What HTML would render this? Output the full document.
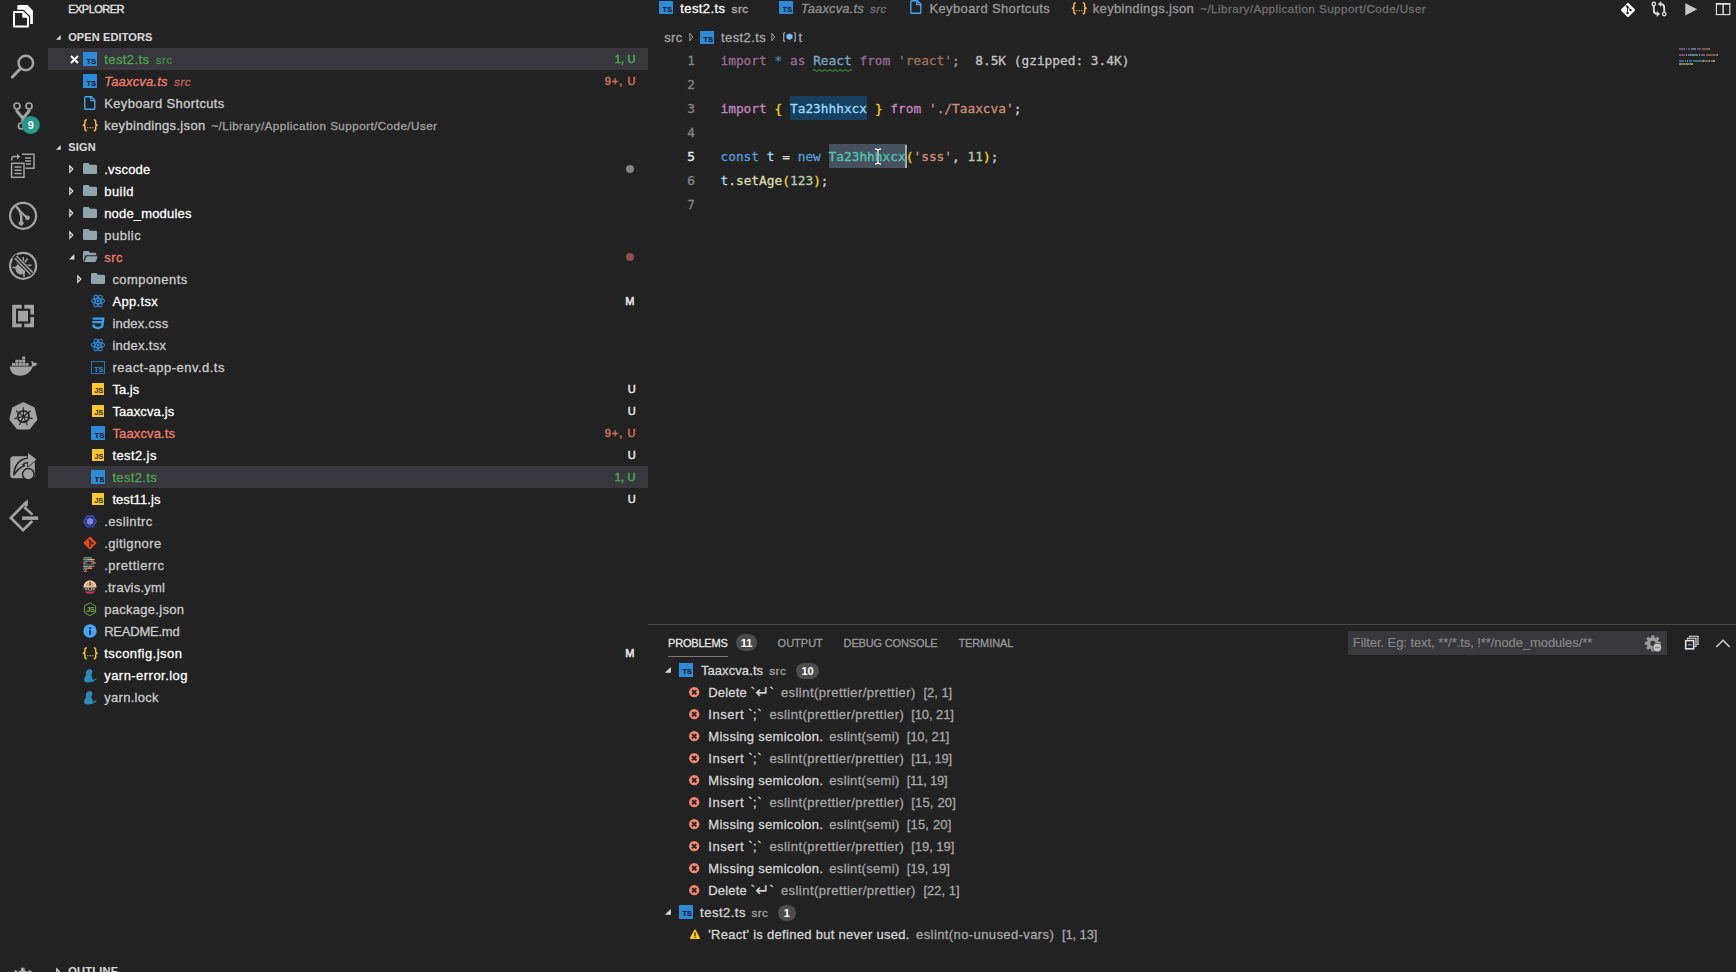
<!DOCTYPE html>
<html lang="en"><head><meta charset="utf-8"><title>test2.ts - sign</title>
<style>
html,body{margin:0;padding:0}
body{width:1736px;height:972px;background:#222222;overflow:hidden;position:relative;font-family:"Liberation Sans",sans-serif;font-size:13px;color:#cccccc}
#root{position:absolute;left:0;top:0;width:1736px;height:972px;opacity:.999}
.a{position:absolute}
svg{display:block;overflow:visible}
.row{position:absolute}
.sel{background:#37373d}
.t{position:absolute;top:.6px;white-space:pre;letter-spacing:.25px;-webkit-text-stroke:.28px currentColor}
.h{font-size:11px;font-weight:bold;color:#d8d8d8;letter-spacing:.1px;top:-.3px;-webkit-text-stroke:.1px currentColor}
.w{color:#ffffff}
.g{color:#4ca64e}
.r{color:#f0806c}
.d{font-size:11.700px;opacity:.75}
.i{font-style:italic}
.bd{font-size:11px;letter-spacing:.2px;-webkit-text-stroke:.5px currentColor;top:.3px}
.ic{overflow:hidden}
.icl{position:absolute;right:.8px;bottom:.2px;font-size:7.2px;line-height:8px;font-weight:bold;letter-spacing:.2px;-webkit-text-stroke:.12px currentColor}
.code{font-family:"DejaVu Sans Mono","Liberation Mono",monospace;font-size:12.800px;letter-spacing:0}
.code .t{letter-spacing:0;top:.7px;-webkit-text-stroke:.3px currentColor}
.ln{color:#858585;text-align:right;width:40px}
.an{color:#c4c4c4}.pk{color:#c586c0}.bl{color:#569cd6}.lb{color:#9cdcfe}.st{color:#ce9178}.pl{color:#d4d4d4}.gd{color:#ffd700}.tl{color:#4ec9b0}.nm{color:#b5cea8}.fn{color:#dcdcaa}
.fd{opacity:.72}
.pt{font-size:11px;color:#9a9a9a;letter-spacing:-.1px;top:-.4px}
.pr .t{top:-.4px}
.big{font-family:'DejaVu Sans',sans-serif;font-size:17px;line-height:10px;position:relative;top:1.200px;letter-spacing:0;-webkit-text-stroke:.1px currentColor}
.badge{position:absolute;background:#4d4d4d;border-radius:9px;color:#fff;font-size:11px;font-weight:bold;text-align:center}
.m{color:#d6d6d6}
.s{color:#a8a8a8}
</style></head>
<body>
<div id="root">
<svg class="a" style="left:8px;top:0px" width="32" height="32" viewBox="8 0 32 32" ><path d="M17.400 5.100H27.600L32.900 10.400V23.900H17.400z" fill="#fff"/><path d="M14 12H22.800L28 17.200V26.600H14z" fill="#222222" stroke="#222222" stroke-width="4.400"/><path d="M14 12H22.800L28 17.200V26.600H14z" fill="#222222" stroke="#fff" stroke-width="2" stroke-linejoin="round"/><path d="M22.300 12V17.700H28z" fill="#fff"/></svg><svg class="a" style="left:8px;top:50px" width="32" height="32" viewBox="8 50 32 32" ><circle cx="25.800" cy="63" r="7.300" fill="none" stroke="#a3a3a3" stroke-width="2.400"/><path d="M20.300 68.700L12.300 77" stroke="#a3a3a3" stroke-width="3" stroke-linecap="round"/></svg><svg class="a" style="left:8px;top:98px" width="36" height="40" viewBox="8 98 36 40" ><g fill="none" stroke="#a3a3a3"><circle cx="17" cy="106" r="3" stroke-width="1.700"/><circle cx="29" cy="106" r="3" stroke-width="1.700"/><circle cx="21.400" cy="126" r="3" stroke-width="1.700"/><path d="M17 109.400V111.300L22.900 118.300V122.600M29 109.400V111.300L23 118.300" stroke-width="3.100" stroke-linejoin="round"/></g><circle cx="30.800" cy="125" r="9" fill="#27998c"/></svg><span class="a" style="left:21.800px;top:116px;width:18px;height:18px;line-height:18px;text-align:center;color:#fff;font-size:11px;font-weight:bold">9</span><svg class="a" style="left:8px;top:148px" width="32" height="34" viewBox="8 148 32 34" ><g fill="none" stroke="#a3a3a3" stroke-width="1.500"><path d="M22 154.300H34V168.300H25.500"/><path d="M25 158h6M25 161h6M26 164h5" /><rect x="11.600" y="163.300" width="12.400" height="14" fill="#222222"/><path d="M14.500 167h7M14.500 170.200h7M14.500 173.400h7"/><path d="M11.800 160.500V158.500C11.800 157 12.500 156.500 14 156.500H18"/></g><path d="M17 153.500L20.300 156.500L17 159.500z" fill="#a3a3a3"/></svg><svg class="a" style="left:8px;top:200px" width="32" height="32" viewBox="8 200 32 32" ><circle cx="23.100" cy="215.800" r="13" fill="none" stroke="#a3a3a3" stroke-width="2.200"/><path d="M16.800 207.300C20.300 209.300 21.700 213 21.300 222" fill="none" stroke="#a3a3a3" stroke-width="2.600" stroke-linecap="round"/><path d="M20.800 211.500C22.500 214 25 216 27.300 217.500" fill="none" stroke="#a3a3a3" stroke-width="2.200"/><circle cx="21.200" cy="223.300" r="2.400" fill="#a3a3a3"/><circle cx="27.500" cy="217.800" r="2.400" fill="#a3a3a3"/></svg><svg class="a" style="left:8px;top:250px" width="32" height="32" viewBox="8 250 32 32" ><circle cx="23.100" cy="265.800" r="13" fill="none" stroke="#a3a3a3" stroke-width="2.200"/><ellipse cx="20.500" cy="269.300" rx="4.800" ry="5.600" fill="#a3a3a3" transform="rotate(-40 20.500 269.300)"/><g stroke="#a3a3a3" stroke-width="1.600" fill="none"><path d="M12.500 267.500h5M23.300 257v6M27.500 258.500l-3 4.500M26 265.300h5.500M27 268.500l4 1.800M24 272.500v4.500M17 262.500l2 2"/></g><path d="M14.200 256.200L32.300 274" stroke="#222222" stroke-width="6"/><path d="M14.800 258.200L30.500 274.600M16.400 256L32.800 272.600" stroke="#a3a3a3" stroke-width="1.500"/></svg><svg class="a" style="left:8px;top:300px" width="32" height="32" viewBox="8 300 32 32" ><rect x="12.200" y="304.800" width="21.800" height="22.500" fill="#a3a3a3"/><rect x="16" y="308.600" width="14.400" height="15" fill="#222222"/><rect x="21.700" y="304" width="2.600" height="25" fill="#222222"/><rect x="28" y="314.500" width="7" height="2.600" fill="#222222"/><rect x="18" y="310.800" width="10" height="10.600" fill="#a3a3a3"/></svg><svg class="a" style="left:6px;top:350px" width="36" height="32" viewBox="6 350 36 32" ><path d="M9.800 366.500H31.500C32 364.500 32 363 31 361.300 32.500 360.300 33.300 361.500 33.800 363 35 362.600 36.500 362.800 37.300 363.500 36.500 365.500 34.500 366.300 32.800 366.300 31 371.500 27 375.800 20 375.800 13.500 375.800 10 372 9.800 366.500z" fill="#a3a3a3"/><g fill="#a3a3a3"><rect x="12" y="363" width="3" height="2.800"/><rect x="15.400" y="363" width="3" height="2.800"/><rect x="18.800" y="363" width="3" height="2.800"/><rect x="22.200" y="363" width="3" height="2.800"/><rect x="25.600" y="363" width="3" height="2.800"/><rect x="15.400" y="359.800" width="3" height="2.800"/><rect x="18.800" y="359.800" width="3" height="2.800"/><rect x="22.200" y="359.800" width="3" height="2.800"/><rect x="22.200" y="356.600" width="3" height="2.800"/></g></svg><svg class="a" style="left:6px;top:400px" width="36" height="34" viewBox="6 400 36 34" ><polygon points="23.4,403.2 33.8,408.2 36.4,419.5 29.2,428.5 17.6,428.5 10.4,419.5 13.0,408.2" fill="#a3a3a3" stroke="#a3a3a3" stroke-width="2" stroke-linejoin="round"/><circle cx="23.400" cy="416.500" r="5.700" fill="none" stroke="#222222" stroke-width="1.700"/><path d="M23.400 416.500L23.4 407.2M23.400 416.500L30.7 410.7M23.400 416.500L32.5 418.6M23.400 416.500L27.4 424.9M23.400 416.500L19.4 424.9M23.400 416.500L14.3 418.6M23.400 416.500L16.1 410.7" stroke="#222222" stroke-width="1.100" fill="none"/><circle cx="23.400" cy="416.500" r="1.600" fill="#222222"/></svg><svg class="a" style="left:8px;top:450px" width="32" height="32" viewBox="8 450 32 32" ><rect x="10.300" y="456.300" width="24.500" height="22" rx="3" fill="#a3a3a3"/><path d="M14 475C14 466 19 459 28 458V453L36.500 459.500 28 466.500V462.500C26 462.700 24 463.500 23 464.500L24.500 465.500C19.500 467.500 16.500 470.500 14 475z" fill="#a3a3a3" stroke="#222222" stroke-width="1.500" stroke-linejoin="round"/><path d="M28 453L36.500 459.500 28 466.500z" fill="#a3a3a3"/><circle cx="28.300" cy="474.300" r="6.500" fill="#222222"/><circle cx="28.300" cy="474.300" r="5" fill="#a3a3a3"/></svg><svg class="a" style="left:6px;top:496px" width="36" height="40" viewBox="6 496 36 40" ><path d="M27 501.500L10.900 517.900 23.100 530.200 32.300 521" fill="none" stroke="#a3a3a3" stroke-width="2.700" stroke-linejoin="miter"/><path d="M27.900 499.200V505.500L25.500 507.500 24.600 503z" fill="#a3a3a3"/><path d="M24.300 507.300L32.600 514.600" stroke="#a3a3a3" stroke-width="2.500" fill="none"/><rect x="22.100" y="516.400" width="16.100" height="3.500" fill="#a3a3a3"/></svg><svg class="a" style="left:13px;top:964px" width="20" height="8" viewBox="13 964 20 8" ><circle cx="22.800" cy="979.500" r="7.500" fill="none" stroke="#a3a3a3" stroke-width="3.600"/><rect x="20.900" y="967.700" width="3.800" height="4" fill="#a3a3a3"/><rect x="20.900" y="967.700" width="3.800" height="4" fill="#a3a3a3" transform="rotate(-45 22.800 979.500)"/><rect x="20.900" y="967.700" width="3.800" height="4" fill="#a3a3a3" transform="rotate(45 22.800 979.500)"/></svg>
<div class="row " style="left:48px;top:-2px;width:600px;height:22px;line-height:22px"><span class="t " style="left:20.2px;letter-spacing:-0.517px;font-size:11px;color:#e0e0e0;top:.2px;-webkit-text-stroke:.4px currentColor">EXPLORER</span></div>
<div class="row " style="left:48px;top:26px;width:600px;height:22px;line-height:22px"><svg class="a" style="left:8.4px;top:9px" width="4.7" height="4.7" viewBox="0 0 6 6" ><path d="M6 0V6H0z" fill="#dcdcdc"/></svg><span class="t h" style="left:20.2px;letter-spacing:0.116px;">OPEN EDITORS</span></div>
<div class="row sel" style="left:48px;top:48px;width:600px;height:22px;line-height:22px"><svg class="a" style="left:21.5px;top:6.6px" width="9" height="9" viewBox="0 0 9 9" ><path d="M1 1L8 8M8 1L1 8" stroke="#fff" stroke-width="2.100" fill="none"/></svg><div class="a ic" style="left:35.2px;top:4.2px;width:13.8px;height:13.5px;background:#2d8ad6"><span class="icl" style="color:#06182b">TS</span></div><span class="t g" style="left:56.2px;letter-spacing:0.425px;">test2.ts</span><span class="t g d" style="left:107.7px;letter-spacing:0.403px;">src</span><span class="t g bd" style="left:566.8px;letter-spacing:0.139px;">1, U</span></div>
<div class="row " style="left:48px;top:70px;width:600px;height:22px;line-height:22px"><div class="a ic" style="left:35.2px;top:4.2px;width:13.8px;height:13.5px;background:#2d8ad6"><span class="icl" style="color:#06182b">TS</span></div><span class="t r i" style="left:56.2px;letter-spacing:0.192px;">Taaxcva.ts</span><span class="t r d i" style="left:126.1px;letter-spacing:0.453px;">src</span><span class="t bd" style="left:556.7px;letter-spacing:1.023px;color:#cc705c">9+, U</span></div>
<div class="row " style="left:48px;top:92px;width:600px;height:22px;line-height:22px"><svg class="a" style="left:36.3px;top:4px" width="11.6" height="14" viewBox="0 0 11.6 14" ><path d="M1.700 0.700H7.400L10.800 4.100V12.400C10.800 12.900 10.400 13.300 9.900 13.300H1.700C1.200 13.300 0.800 12.900 0.800 12.400V1.600C0.800 1.100 1.200 0.700 1.700 0.700z" fill="none" stroke="#42a5f5" stroke-width="1.400"/><path d="M6.900 0.700V4.600H10.800" fill="none" stroke="#42a5f5" stroke-width="1.400"/></svg><span class="t " style="left:56.2px;letter-spacing:0.348px;">Keyboard Shortcuts</span></div>
<div class="row " style="left:48px;top:114px;width:600px;height:22px;line-height:22px"><svg class="a" style="left:33.7px;top:4.8px" width="16.6" height="12.6" viewBox="0 0 16 12" ><g fill="none" stroke="#fbc02d" stroke-width="1.4" stroke-linecap="butt"><path d="M4.6 0.7C2.9 0.7 2.8 1.5 2.8 2.7V4.3C2.8 5.4 2.2 6 0.8 6 2.2 6 2.8 6.600 2.800 7.700V9.300C2.800 10.500 2.900 11.300 4.600 11.300"/><path d="M11.400 0.700C13.100 0.700 13.200 1.500 13.200 2.700V4.300C13.200 5.400 13.800 6 15.200 6 13.800 6 13.200 6.600 13.200 7.700V9.300C13.200 10.500 13.100 11.300 11.400 11.300"/></g><g fill="#fbc02d"><rect x="5.100" y="7.700" width="1" height="1.200"/><rect x="7.500" y="7.700" width="1" height="1.200"/><rect x="9.900" y="7.700" width="1" height="1.200"/></g></svg><span class="t " style="left:56.2px;letter-spacing:0.325px;">keybindings.json</span><span class="t d" style="left:163.3px;letter-spacing:0.426px;">~/Library/Application Support/Code/User</span></div>
<div class="row " style="left:48px;top:136px;width:600px;height:22px;line-height:22px"><svg class="a" style="left:8.4px;top:9px" width="4.7" height="4.7" viewBox="0 0 6 6" ><path d="M6 0V6H0z" fill="#dcdcdc"/></svg><span class="t h" style="left:20.2px;letter-spacing:0.201px;">SIGN</span></div>
<div class="row " style="left:48px;top:158px;width:600px;height:22px;line-height:22px"><svg class="a" style="left:20.6px;top:6.2px" width="5" height="10" viewBox="0 0 5 10" ><path d="M0.800 2L3.800 5.100L0.800 8.200z" fill="none" stroke="#e0e0e0" stroke-width="1.200" stroke-linejoin="miter"/></svg><svg class="a" style="left:35.0px;top:5.3px" width="14" height="11.1" viewBox="0 0 14 11.1" ><path d="M1.300 0h4.200l1.500 1.700h5.700c.700 0 1.300.600 1.300 1.300v6.800c0 .700-.600 1.300-1.300 1.300H1.300C.600 11.100 0 10.500 0 9.800V1.300C0 .600.600 0 1.300 0z" fill="#90a4ae"/></svg><span class="t w" style="left:56.2px;letter-spacing:0.215px;">.vscode</span><div class="a" style="left:578.400px;top:6.700px;width:8px;height:8px;border-radius:50%;background:#868686"></div></div>
<div class="row " style="left:48px;top:180px;width:600px;height:22px;line-height:22px"><svg class="a" style="left:20.6px;top:6.2px" width="5" height="10" viewBox="0 0 5 10" ><path d="M0.800 2L3.800 5.100L0.800 8.200z" fill="none" stroke="#e0e0e0" stroke-width="1.200" stroke-linejoin="miter"/></svg><svg class="a" style="left:35.0px;top:5.3px" width="14" height="11.1" viewBox="0 0 14 11.1" ><path d="M1.300 0h4.200l1.500 1.700h5.700c.700 0 1.300.600 1.300 1.300v6.800c0 .700-.600 1.300-1.300 1.300H1.300C.600 11.100 0 10.500 0 9.800V1.300C0 .600.600 0 1.300 0z" fill="#90a4ae"/></svg><span class="t w" style="left:56.2px;letter-spacing:0.458px;">build</span></div>
<div class="row " style="left:48px;top:202px;width:600px;height:22px;line-height:22px"><svg class="a" style="left:20.6px;top:6.2px" width="5" height="10" viewBox="0 0 5 10" ><path d="M0.800 2L3.800 5.100L0.800 8.200z" fill="none" stroke="#e0e0e0" stroke-width="1.200" stroke-linejoin="miter"/></svg><svg class="a" style="left:35.0px;top:5.3px" width="14" height="11.1" viewBox="0 0 14 11.1" ><path d="M1.300 0h4.200l1.500 1.700h5.700c.700 0 1.300.600 1.300 1.300v6.800c0 .700-.600 1.300-1.300 1.300H1.300C.600 11.100 0 10.500 0 9.800V1.300C0 .600.600 0 1.300 0z" fill="#90a4ae"/></svg><span class="t w" style="left:56.2px;letter-spacing:0.173px;">node_modules</span></div>
<div class="row " style="left:48px;top:224px;width:600px;height:22px;line-height:22px"><svg class="a" style="left:20.6px;top:6.2px" width="5" height="10" viewBox="0 0 5 10" ><path d="M0.800 2L3.800 5.100L0.800 8.200z" fill="none" stroke="#e0e0e0" stroke-width="1.200" stroke-linejoin="miter"/></svg><svg class="a" style="left:35.0px;top:5.3px" width="14" height="11.1" viewBox="0 0 14 11.1" ><path d="M1.300 0h4.200l1.500 1.700h5.700c.700 0 1.300.600 1.300 1.300v6.800c0 .700-.600 1.300-1.300 1.300H1.300C.600 11.100 0 10.500 0 9.800V1.300C0 .600.600 0 1.300 0z" fill="#90a4ae"/></svg><span class="t " style="left:56.2px;letter-spacing:0.526px;">public</span></div>
<div class="row " style="left:48px;top:246px;width:600px;height:22px;line-height:22px"><svg class="a" style="left:20.7px;top:7.9px" width="5.4" height="5.4" viewBox="0 0 6 6" ><path d="M6 0V6H0z" fill="#dcdcdc"/></svg><svg class="a" style="left:35.0px;top:5.4px" width="14.6" height="11.1" viewBox="0 0 14.6 11.1" ><path d="M1.300 0h4.200l1.500 1.700h4.900c.700 0 1.300.600 1.300 1.300v1.200H3.400c-.600 0-1.100.400-1.300 1L.300 10.600C.100 10.400 0 10.100 0 9.800V1.300C0 .600.600 0 1.300 0z" fill="#90a4ae"/><path d="M3.600 5.300H13.900c.400 0 .700.400.600.800l-1.400 4.200c-.200.500-.600.800-1.100.800H1.200z" fill="#90a4ae"/></svg><span class="t r" style="left:56.2px;letter-spacing:0.528px;">src</span><div class="a" style="left:578.400px;top:6.700px;width:8px;height:8px;border-radius:50%;background:#8c5046"></div></div>
<div class="row " style="left:48px;top:268px;width:600px;height:22px;line-height:22px"><svg class="a" style="left:28.8px;top:6.2px" width="5" height="10" viewBox="0 0 5 10" ><path d="M0.800 2L3.800 5.100L0.800 8.200z" fill="none" stroke="#e0e0e0" stroke-width="1.200" stroke-linejoin="miter"/></svg><svg class="a" style="left:43.2px;top:5.3px" width="14" height="11.1" viewBox="0 0 14 11.1" ><path d="M1.300 0h4.200l1.500 1.700h5.700c.700 0 1.300.600 1.300 1.300v6.800c0 .700-.600 1.300-1.300 1.300H1.300C.600 11.100 0 10.500 0 9.800V1.300C0 .600.600 0 1.300 0z" fill="#90a4ae"/></svg><span class="t " style="left:64.4px;letter-spacing:0.441px;">components</span></div>
<div class="row " style="left:48px;top:290px;width:600px;height:22px;line-height:22px"><svg class="a" style="left:43.2px;top:4px" width="14" height="14" viewBox="0 0 14 14" ><g fill="none" stroke="#2b8fe3" stroke-width="1.05"><ellipse cx="7" cy="7" rx="6.5" ry="2.600"/><ellipse cx="7" cy="7" rx="6.5" ry="2.600" transform="rotate(60 7 7)"/><ellipse cx="7" cy="7" rx="6.5" ry="2.600" transform="rotate(120 7 7)"/></g><circle cx="7" cy="7" r="1.300" fill="#2b8fe3"/></svg><span class="t w" style="left:64.4px;letter-spacing:0.340px;">App.tsx</span><span class="t bd" style="left:577.3px;color:#e8e8e8">M</span></div>
<div class="row " style="left:48px;top:312px;width:600px;height:22px;line-height:22px"><svg class="a" style="left:43.2px;top:4.5px" width="14" height="13" viewBox="0 0 14 13" ><path d="M1.800 0.500H13.500L12.300 10.300 7 12.500 1.600 10.400 1.300 7.600H3.700L3.900 8.900 7 10 10.100 8.900 10.500 6.200H1L1.300 3.900H10.800L11 2.800H1.500z" fill="#3ba0f0"/></svg><span class="t " style="left:64.4px;letter-spacing:0.200px;">index.css</span></div>
<div class="row " style="left:48px;top:334px;width:600px;height:22px;line-height:22px"><svg class="a" style="left:43.2px;top:4px" width="14" height="14" viewBox="0 0 14 14" ><g fill="none" stroke="#2b8fe3" stroke-width="1.05"><ellipse cx="7" cy="7" rx="6.5" ry="2.600"/><ellipse cx="7" cy="7" rx="6.5" ry="2.600" transform="rotate(60 7 7)"/><ellipse cx="7" cy="7" rx="6.5" ry="2.600" transform="rotate(120 7 7)"/></g><circle cx="7" cy="7" r="1.300" fill="#2b8fe3"/></svg><span class="t " style="left:64.4px;letter-spacing:0.286px;">index.tsx</span></div>
<div class="row " style="left:48px;top:356px;width:600px;height:22px;line-height:22px"><div class="a ic" style="left:43.2px;top:4.8px;width:11.8px;height:11.5px;border:1px solid #2374b8"><span class="icl" style="color:#2d8ad6;right:0.2px;bottom:-0.4px">TS</span></div><span class="t " style="left:64.4px;letter-spacing:0.482px;">react-app-env.d.ts</span></div>
<div class="row " style="left:48px;top:378px;width:600px;height:22px;line-height:22px"><div class="a ic" style="left:44.0px;top:5.1px;width:12.2px;height:12.2px;background:#fdc928"><span class="icl" style="color:#3a3314;right:0.6px;bottom:0.2px">JS</span></div><span class="t w" style="left:64.4px;letter-spacing:0.041px;">Ta.js</span><span class="t bd" style="left:579.7px;color:#e8e8e8">U</span></div>
<div class="row " style="left:48px;top:400px;width:600px;height:22px;line-height:22px"><div class="a ic" style="left:44.0px;top:5.1px;width:12.2px;height:12.2px;background:#fdc928"><span class="icl" style="color:#3a3314;right:0.6px;bottom:0.2px">JS</span></div><span class="t w" style="left:64.4px;letter-spacing:0.122px;">Taaxcva.js</span><span class="t bd" style="left:579.7px;color:#e8e8e8">U</span></div>
<div class="row " style="left:48px;top:422px;width:600px;height:22px;line-height:22px"><div class="a ic" style="left:43.400000000000006px;top:4.2px;width:13.8px;height:13.5px;background:#2d8ad6"><span class="icl" style="color:#06182b">TS</span></div><span class="t r" style="left:64.4px;letter-spacing:0.142px;">Taaxcva.ts</span><span class="t bd" style="left:556.7px;letter-spacing:1.023px;color:#cc705c">9+, U</span></div>
<div class="row " style="left:48px;top:444px;width:600px;height:22px;line-height:22px"><div class="a ic" style="left:44.0px;top:5.1px;width:12.2px;height:12.2px;background:#fdc928"><span class="icl" style="color:#3a3314;right:0.6px;bottom:0.2px">JS</span></div><span class="t w" style="left:64.4px;letter-spacing:0.402px;">test2.js</span><span class="t bd" style="left:579.7px;color:#e8e8e8">U</span></div>
<div class="row sel" style="left:48px;top:466px;width:600px;height:22px;line-height:22px"><div class="a ic" style="left:43.400000000000006px;top:4.2px;width:13.8px;height:13.5px;background:#2d8ad6"><span class="icl" style="color:#06182b">TS</span></div><span class="t g" style="left:64.4px;letter-spacing:0.354px;">test2.ts</span><span class="t bd" style="left:566.8px;letter-spacing:0.139px;color:#4ca64e">1, U</span></div>
<div class="row " style="left:48px;top:488px;width:600px;height:22px;line-height:22px"><div class="a ic" style="left:44.0px;top:5.1px;width:12.2px;height:12.2px;background:#fdc928"><span class="icl" style="color:#3a3314;right:0.6px;bottom:0.2px">JS</span></div><span class="t w" style="left:64.4px;letter-spacing:0.068px;">test11.js</span><span class="t bd" style="left:579.7px;color:#e8e8e8">U</span></div>
<div class="row " style="left:48px;top:510px;width:600px;height:22px;line-height:22px"><svg class="a" style="left:35.0px;top:4.6px" width="14" height="13" viewBox="0 0 14 13" ><polygon points="14.00,6.40 10.50,12.46 3.50,12.46 0.00,6.40 3.50,0.34 10.50,0.34" fill="#3548c4"/><polygon points="11.70,6.40 9.35,10.47 4.65,10.47 2.30,6.40 4.65,2.33 9.35,2.33" fill="#222"/><polygon points="10.29,8.30 7.00,10.20 3.71,8.30 3.71,4.50 7.00,2.60 10.29,4.50" fill="#7f86dc"/></svg><span class="t " style="left:56.2px;letter-spacing:0.400px;">.eslintrc</span></div>
<div class="row " style="left:48px;top:532px;width:600px;height:22px;line-height:22px"><svg class="a" style="left:35.0px;top:4px" width="14" height="14" viewBox="0 0 14 14" ><rect x="2.200" y="2.200" width="9.600" height="9.600" rx="1" fill="#e64a19" transform="rotate(45 7 7)"/><path d="M5.300 3.300L9.300 7.300M7 5V9.800" stroke="#3a2018" stroke-width="1.100" fill="none"/><circle cx="7" cy="9.900" r="1.100" fill="#3a2018"/><circle cx="9.500" cy="7.400" r="1.100" fill="#3a2018"/><circle cx="7" cy="5" r="1" fill="#3a2018"/></svg><span class="t " style="left:56.2px;letter-spacing:0.391px;">.gitignore</span></div>
<div class="row " style="left:48px;top:554px;width:600px;height:22px;line-height:22px"><svg class="a" style="left:35.4px;top:3.2px" width="14" height="15.5" viewBox="0 0 14 15.5" ><rect x="0.50" y="0.30" width="8.50" height="1.150" rx=".550" fill="#56b3b4"/><rect x="0.00" y="2.00" width="3.50" height="1.150" rx=".550" fill="#ea5e5e"/><rect x="3.50" y="2.00" width="8.00" height="1.150" rx=".550" fill="#f7b93e"/><rect x="0.50" y="3.70" width="6.00" height="1.150" rx=".550" fill="#56b3b4"/><rect x="6.50" y="3.70" width="5.00" height="1.150" rx=".550" fill="#bf85bf"/><rect x="0.00" y="5.40" width="2.00" height="1.150" rx=".550" fill="#f7b93e"/><rect x="2.00" y="5.40" width="2.20" height="1.150" rx=".550" fill="#bf85bf"/><rect x="8.30" y="5.40" width="4.70" height="1.150" rx=".550" fill="#f7b93e"/><rect x="0.50" y="7.10" width="1.80" height="1.150" rx=".550" fill="#ea5e5e"/><rect x="2.80" y="7.10" width="8.20" height="1.150" rx=".550" fill="#4d616e"/><rect x="0.00" y="8.80" width="5.50" height="1.150" rx=".550" fill="#56b3b4"/><rect x="5.50" y="8.80" width="3.50" height="1.150" rx=".550" fill="#bf85bf"/><rect x="9.00" y="8.80" width="2.50" height="1.150" rx=".550" fill="#ea5e5e"/><rect x="0.50" y="10.50" width="3.50" height="1.150" rx=".550" fill="#bf85bf"/><rect x="4.00" y="10.50" width="5.30" height="1.150" rx=".550" fill="#f7b93e"/><rect x="0.00" y="12.20" width="2.00" height="1.150" rx=".550" fill="#56b3b4"/><rect x="2.00" y="12.20" width="2.20" height="1.150" rx=".550" fill="#f7b93e"/><rect x="0.50" y="13.90" width="3.70" height="1.150" rx=".550" fill="#ea5e5e"/></svg><span class="t " style="left:56.2px;letter-spacing:0.499px;">.prettierrc</span></div>
<div class="row " style="left:48px;top:576px;width:600px;height:22px;line-height:22px"><svg class="a" style="left:35.3px;top:3.7px" width="14" height="14.5" viewBox="0 0 14 14.5" ><ellipse cx="7" cy="7.600" rx="6.500" ry="6.300" fill="#3a3632"/><path d="M0.600 6.800C0.600 2.800 3.600 0.500 7 0.500s6.400 2.300 6.400 6.300z" fill="#eee3b8"/><path d="M5.800 0.700L7 2.300 8.200 0.700V5.800H5.800z" fill="#c8403c"/><path d="M2.500 3.500L3.500 6M4.300 2.300L4.800 5.800M11.500 3.500L10.500 6M9.700 2.300L9.200 5.800" stroke="#c8403c" stroke-width=".600"/><rect x="0.400" y="6.200" width="13.200" height="1.200" rx=".600" fill="#d9ceA8"/><rect x="2.500" y="7.800" width="3.400" height="2" fill="#cbbb9a"/><rect x="8.100" y="7.800" width="3.400" height="2" fill="#cbbb9a"/><circle cx="4.300" cy="8.800" r=".800" fill="#2a2a2a"/><circle cx="9.700" cy="8.800" r=".800" fill="#2a2a2a"/><path d="M2 10.800C4 12.200 10 12.200 12 10.800L10.800 13C9 14 5 14 3.200 13z" fill="#cc2f4b"/><rect x="5.600" y="9.800" width="2.800" height="1.200" fill="#8a7a6a"/></svg><span class="t " style="left:56.2px;letter-spacing:0.230px;">.travis.yml</span></div>
<div class="row " style="left:48px;top:598px;width:600px;height:22px;line-height:22px"><svg class="a" style="left:35.0px;top:3.7px" width="14" height="14.5" viewBox="0 0 14 14.5" ><path d="M7 0.800L12.600 4V10.400L7 13.600 1.400 10.400V4z" fill="none" stroke="#7cb342" stroke-width=".900"/><text x="7.200" y="9.900" font-family="Liberation Sans,sans-serif" font-weight="bold" font-size="7.400" fill="#7cb342" text-anchor="middle" letter-spacing="-0.500">JS</text></svg><span class="t " style="left:56.2px;letter-spacing:0.289px;">package.json</span></div>
<div class="row " style="left:48px;top:620px;width:600px;height:22px;line-height:22px"><svg class="a" style="left:35.0px;top:4px" width="14" height="14" viewBox="0 0 14 14" ><circle cx="7" cy="7" r="6.700" fill="#42a5f5"/><rect x="6.100" y="6" width="1.800" height="4.600" fill="#222"/><rect x="6.100" y="3.400" width="1.800" height="1.700" fill="#222"/></svg><span class="t " style="left:56.2px;letter-spacing:-0.225px;">README.md</span></div>
<div class="row " style="left:48px;top:642px;width:600px;height:22px;line-height:22px"><svg class="a" style="left:33.7px;top:4.8px" width="16.6" height="12.6" viewBox="0 0 16 12" ><g fill="none" stroke="#fbc02d" stroke-width="1.4" stroke-linecap="butt"><path d="M4.6 0.7C2.9 0.7 2.8 1.5 2.8 2.7V4.3C2.8 5.4 2.2 6 0.8 6 2.2 6 2.8 6.600 2.800 7.700V9.300C2.800 10.500 2.900 11.300 4.600 11.300"/><path d="M11.400 0.700C13.100 0.700 13.200 1.500 13.200 2.700V4.300C13.200 5.400 13.800 6 15.200 6 13.800 6 13.200 6.600 13.200 7.700V9.300C13.200 10.500 13.100 11.300 11.400 11.300"/></g><g fill="#fbc02d"><rect x="5.100" y="7.700" width="1" height="1.200"/><rect x="7.500" y="7.700" width="1" height="1.200"/><rect x="9.900" y="7.700" width="1" height="1.200"/></g></svg><span class="t w" style="left:56.2px;letter-spacing:0.453px;">tsconfig.json</span><span class="t bd" style="left:577.3px;color:#e8e8e8">M</span></div>
<div class="row " style="left:48px;top:664px;width:600px;height:22px;line-height:22px"><svg class="a" style="left:35.9px;top:4.5px" width="13" height="13.6" viewBox="0 0 13 13.6" ><path d="M5.900 0C7 .300 8 .800 8.200 1.800 8.500 2.800 8.500 3.800 8 4.600 7.600 5.400 7.200 5.900 7.300 6.600 7.600 7.600 8.600 8.400 8.600 9.600 8.700 10.300 8.600 10.800 8.800 11L12.200 9.200 12.600 10 9.600 12.300C8 13.200 5.500 13.500 3.500 13.400 2 13.300.600 12.800.200 11.800-.200 10.600.400 8.600 1.300 7.200 1.800 6.500 2.200 6.200 2.100 5.500 1.800 4.500 1.700 3.600 2.100 2.800 2.500 1.800 3.300.800 4.400.500 4.900.300 5.400.100 5.900 0z" fill="#2a8bb8"/></svg><span class="t w" style="left:56.2px;letter-spacing:0.461px;">yarn-error.log</span></div>
<div class="row " style="left:48px;top:686px;width:600px;height:22px;line-height:22px"><svg class="a" style="left:35.9px;top:4.5px" width="13" height="13.6" viewBox="0 0 13 13.6" ><path d="M5.900 0C7 .300 8 .800 8.200 1.800 8.500 2.800 8.500 3.800 8 4.600 7.600 5.400 7.200 5.900 7.300 6.600 7.600 7.600 8.600 8.400 8.600 9.600 8.700 10.300 8.600 10.800 8.800 11L12.200 9.200 12.600 10 9.600 12.300C8 13.200 5.500 13.500 3.500 13.400 2 13.300.600 12.800.200 11.800-.200 10.600.400 8.600 1.300 7.200 1.800 6.500 2.200 6.200 2.100 5.500 1.800 4.500 1.700 3.600 2.100 2.800 2.500 1.800 3.300.800 4.400.500 4.900.300 5.400.100 5.900 0z" fill="#2a8bb8"/></svg><span class="t " style="left:56.2px;letter-spacing:0.296px;">yarn.lock</span></div>
<div class="row " style="left:48px;top:960.2px;width:600px;height:22px;line-height:22px"><svg class="a" style="left:8px;top:6.5px" width="5" height="10" viewBox="0 0 5 10" ><path d="M0.800 2L3.800 5.100L0.800 8.200z" fill="none" stroke="#e0e0e0" stroke-width="1.200" stroke-linejoin="miter"/></svg><span class="t h" style="left:20.2px;letter-spacing:0.286px;">OUTLINE</span></div>
<div class="row " style="left:0px;top:-2.5px;width:1736px;height:22px;line-height:22px"><div class="a ic" style="left:659.2px;top:3.3px;width:13.8px;height:13.5px;background:#2d8ad6"><span class="icl" style="color:#06182b">TS</span></div><span class="t w" style="left:680.2px;letter-spacing:0.425px;">test2.ts</span><span class="t d" style="left:731.6px;letter-spacing:0.453px;color:#e0e0e0">src</span><div class="a ic" style="left:779.2px;top:3.3px;width:13.8px;height:13.5px;background:#2d8ad6"><span class="icl" style="color:#06182b">TS</span></div><span class="t i" style="left:800.8px;letter-spacing:0.136px;color:#8f8f8f">Taaxcva.ts</span><span class="t d i" style="left:869.9px;letter-spacing:0.453px;color:#8f8f8f">src</span><svg class="a" style="left:910.2px;top:2.2px" width="11.6" height="14" viewBox="0 0 11.6 14" ><path d="M1.700 0.700H7.400L10.800 4.100V12.400C10.800 12.900 10.400 13.300 9.900 13.300H1.700C1.200 13.300 0.800 12.900 0.800 12.400V1.600C0.800 1.100 1.200 0.700 1.700 0.700z" fill="none" stroke="#42a5f5" stroke-width="1.400"/><path d="M6.900 0.700V4.600H10.800" fill="none" stroke="#42a5f5" stroke-width="1.400"/></svg><span class="t " style="left:929.5px;letter-spacing:0.360px;color:#9a9a9a">Keyboard Shortcuts</span><svg class="a" style="left:1070.7px;top:4.0px" width="16.6" height="12.6" viewBox="0 0 16 12" ><g fill="none" stroke="#fbc02d" stroke-width="1.4" stroke-linecap="butt"><path d="M4.6 0.7C2.9 0.7 2.8 1.5 2.8 2.7V4.3C2.8 5.4 2.2 6 0.8 6 2.2 6 2.8 6.600 2.800 7.700V9.300C2.800 10.500 2.900 11.300 4.600 11.300"/><path d="M11.400 0.700C13.100 0.700 13.200 1.500 13.200 2.700V4.300C13.200 5.400 13.800 6 15.200 6 13.800 6 13.200 6.600 13.200 7.700V9.300C13.200 10.500 13.100 11.300 11.400 11.300"/></g><g fill="#fbc02d"><rect x="5.100" y="7.700" width="1" height="1.200"/><rect x="7.500" y="7.700" width="1" height="1.200"/><rect x="9.900" y="7.700" width="1" height="1.200"/></g></svg><span class="t " style="left:1092.8px;letter-spacing:0.325px;color:#9a9a9a">keybindings.json</span><span class="t d" style="left:1200.2px;letter-spacing:0.421px;color:#8a8a8a">~/Library/Application Support/Code/User</span></div>
<svg class="a" style="left:1620px;top:2px" width="16" height="16" viewBox="0 0 16 16" ><rect x="2.700" y="2.700" width="10.600" height="10.600" rx="1" fill="#fff" transform="rotate(45 8 8)"/><path d="M5.700 3L10.600 8M7.500 4.800V11" stroke="#2a2f3a" stroke-width="1" fill="none"/><circle cx="7.500" cy="11" r="1.200" fill="#10141f"/><circle cx="10.600" cy="8.100" r="1.200" fill="#10141f"/><circle cx="7.500" cy="4.900" r="1.150" fill="#10141f"/></svg><svg class="a" style="left:1650px;top:0px" width="18" height="18" viewBox="0 0 18 18" ><g fill="none" stroke="#dadada"><circle cx="3.800" cy="4" r="1.700" stroke-width="1.400"/><circle cx="14.200" cy="14.100" r="1.700" stroke-width="1.400"/><path d="M3.800 5.800V10.500C3.800 13 4.800 13.900 7.200 13.900" stroke-width="1.900"/><path d="M14.200 12.300V7.500C14.200 5 13.200 4.100 10.800 4.100" stroke-width="1.900"/></g><path d="M6.700 10.900L10.100 13.900 6.700 16.900z" fill="#dadada"/><path d="M11.300 1.100L7.900 4.100 11.300 7.100z" fill="#dadada"/></svg><svg class="a" style="left:1685px;top:3px" width="13" height="13" viewBox="0 0 13 13" ><path d="M0.300 0.300L12.200 6.300 0.300 12.500z" fill="#c8c8c8"/></svg><svg class="a" style="left:1715px;top:2px" width="16" height="14" viewBox="0 0 16 14" ><rect x="1.400" y="1.600" width="13.400" height="11" fill="none" stroke="#e4e4e4" stroke-width="1.100"/><rect x="0.900" y="1" width="14.400" height="1.700" fill="#e4e4e4"/><rect x="7.400" y="2" width="1.400" height="11" fill="#e4e4e4"/></svg>
<div class="row " style="left:0px;top:26.3px;width:1736px;height:22px;line-height:22px"><span class="t s" style="left:664.2px;letter-spacing:0.328px;">src</span><svg class="a" style="left:689px;top:5.8px" width="5" height="10" viewBox="0 0 5 10" ><path d="M0.800 1.300L3.800 5 0.800 8.700z" fill="none" stroke="#a0a0a0" stroke-width="1"/></svg><div class="a ic" style="left:700.2px;top:4.3px;width:13.8px;height:13.5px;background:#2d8ad6"><span class="icl" style="color:#06182b">TS</span></div><span class="t s" style="left:721px;letter-spacing:0.411px;">test2.ts</span><svg class="a" style="left:771.3px;top:5.8px" width="5" height="10" viewBox="0 0 5 10" ><path d="M0.800 1.300L3.800 5 0.800 8.700z" fill="none" stroke="#a0a0a0" stroke-width="1"/></svg><svg class="a" style="left:782.5px;top:5px" width="13" height="12" viewBox="0 0 13 12" ><path d="M2.200 1.800H0.800V10.200H2.200M10.800 1.800H12.200V10.200H10.800" fill="none" stroke="#c8c8c8" stroke-width="1"/><path d="M3.500 3.800L6.500 2.500 9.500 3.800V7.200L6.500 9 3.500 7.200z" fill="#75beff"/></svg><span class="t s" style="left:798.4px;">t</span></div>
<div class="a" style="left:790px;top:96px;width:77.200px;height:24px;background:#17405f"></div>
<div class="a" style="left:829px;top:144px;width:77.500px;height:24px;background:#46515d"></div>
<div class="a" style="left:905.300px;top:144.500px;width:2px;height:23px;background:#a8a8a8"></div>
<div class="row code" style="left:0px;top:48px;width:1736px;height:24px;line-height:24px"><span class="t ln" style="left:655px;">1</span><span class="t pk fd" style="left:720.5px;">import</span><span class="t bl fd" style="left:774.54px;">*</span><span class="t pk fd" style="left:789.98px;">as</span><span class="t lb fd" style="left:813.14px;">React</span><span class="t pk fd" style="left:859.46px;">from</span><span class="t st fd" style="left:898.06px;">'react'</span><span class="t pl fd" style="left:952.1px;">;</span><span class="t an" style="left:975.26px;">8.5K (gzipped: 3.4K)</span></div>
<div class="row code" style="left:0px;top:72px;width:1736px;height:24px;line-height:24px"><span class="t ln" style="left:655px;">2</span></div>
<div class="row code" style="left:0px;top:96px;width:1736px;height:24px;line-height:24px"><span class="t ln" style="left:655px;">3</span><span class="t pk" style="left:720.5px;">import</span><span class="t gd" style="left:774.54px;">{</span><span class="t lb" style="left:789.98px;">Ta23hhhxcx</span><span class="t gd" style="left:874.9px;">}</span><span class="t pk" style="left:890.34px;">from</span><span class="t st" style="left:928.94px;">'./Taaxcva'</span><span class="t pl" style="left:1013.86px;">;</span></div>
<div class="row code" style="left:0px;top:120px;width:1736px;height:24px;line-height:24px"><span class="t ln" style="left:655px;">4</span></div>
<div class="row code" style="left:0px;top:144px;width:1736px;height:24px;line-height:24px"><span class="t ln" style="left:655px;color:#ececec">5</span><span class="t bl" style="left:720.5px;">const</span><span class="t lb" style="left:766.82px;">t</span><span class="t pl" style="left:782.26px;">=</span><span class="t bl" style="left:797.7px;">new</span><span class="t tl" style="left:828.58px;">Ta23hhhxcx</span><span class="t gd" style="left:905.78px;">(</span><span class="t st" style="left:913.5px;">'sss'</span><span class="t pl" style="left:952.1px;">,</span><span class="t nm" style="left:967.54px;">11</span><span class="t gd" style="left:982.98px;">)</span><span class="t pl" style="left:990.7px;">;</span></div>
<div class="row code" style="left:0px;top:168px;width:1736px;height:24px;line-height:24px"><span class="t ln" style="left:655px;">6</span><span class="t lb" style="left:720.5px;">t</span><span class="t pl" style="left:728.22px;">.</span><span class="t fn" style="left:735.94px;">setAge</span><span class="t gd" style="left:782.26px;">(</span><span class="t nm" style="left:789.98px;">123</span><span class="t gd" style="left:813.14px;">)</span><span class="t pl" style="left:820.86px;">;</span></div>
<div class="row code" style="left:0px;top:192px;width:1736px;height:24px;line-height:24px"><span class="t ln" style="left:655px;">7</span></div>
<svg class="a" style="left:813px;top:69.1px" width="39.5" height="3" viewBox="0 0 39.5 3" ><path d="M0 1.500 Q1.30 0.10 2.60 1.500 Q3.90 2.90 5.20 1.500 Q6.50 0.10 7.80 1.500 Q9.10 2.90 10.40 1.500 Q11.70 0.10 13.00 1.500 Q14.30 2.90 15.60 1.500 Q16.90 0.10 18.20 1.500 Q19.50 2.90 20.80 1.500 Q22.10 0.10 23.40 1.500 Q24.70 2.90 26.00 1.500 Q27.30 0.10 28.60 1.500 Q29.90 2.90 31.20 1.500 Q32.50 0.10 33.80 1.500 Q35.10 2.90 36.40 1.500 Q37.70 0.10 39.00 1.500" fill="none" stroke="#3fa040" stroke-width="1.050"/></svg>
<svg class="a" style="left:873.5px;top:148px" width="8" height="17" viewBox="0 0 8 17" ><path d="M1 1C3 1 4 1.500 4 3V14C4 15.500 3 16 1 16M7 1C5 1 4 1.500 4 3M4 14C4 15.500 5 16 7 16" fill="none" stroke="#1a1a1a" stroke-width="2.100"/><path d="M1 1C3 1 4 1.500 4 3V14C4 15.500 3 16 1 16M7 1C5 1 4 1.500 4 3M4 14C4 15.500 5 16 7 16" fill="none" stroke="#ffffff" stroke-width="1.300"/></svg>
<div class="a" style="left:1679.00px;top:48.20px;width:5.96px;height:1.900px;opacity:.68;background:#9a6a97"></div><div class="a" style="left:1686.07px;top:48.20px;width:0.91px;height:1.900px;opacity:.68;background:#4f86bd"></div><div class="a" style="left:1688.09px;top:48.20px;width:1.92px;height:1.900px;opacity:.68;background:#9a6a97"></div><div class="a" style="left:1691.12px;top:48.20px;width:4.95px;height:1.900px;opacity:.68;background:#6aa3cc"></div><div class="a" style="left:1697.18px;top:48.20px;width:3.94px;height:1.900px;opacity:.68;background:#9a6a97"></div><div class="a" style="left:1702.23px;top:48.20px;width:6.97px;height:1.900px;opacity:.68;background:#a86e58"></div><div class="a" style="left:1709.30px;top:48.20px;width:0.91px;height:1.900px;opacity:.68;background:#bdbdbd"></div>
<div class="a" style="left:1679.00px;top:54.24px;width:5.96px;height:1.900px;opacity:.68;background:#9a6a97"></div><div class="a" style="left:1686.07px;top:54.24px;width:0.91px;height:1.900px;opacity:.68;background:#c8c8b0"></div><div class="a" style="left:1688.09px;top:54.24px;width:10.00px;height:1.900px;opacity:.68;background:#6aa3cc"></div><div class="a" style="left:1699.20px;top:54.24px;width:0.91px;height:1.900px;opacity:.68;background:#c8c8b0"></div><div class="a" style="left:1701.22px;top:54.24px;width:3.94px;height:1.900px;opacity:.68;background:#9a6a97"></div><div class="a" style="left:1706.27px;top:54.24px;width:11.01px;height:1.900px;opacity:.68;background:#a86e58"></div><div class="a" style="left:1717.38px;top:54.24px;width:0.91px;height:1.900px;opacity:.68;background:#bdbdbd"></div>
<div class="a" style="left:1679.00px;top:60.28px;width:4.95px;height:1.900px;opacity:.68;background:#4f86bd"></div><div class="a" style="left:1685.06px;top:60.28px;width:0.91px;height:1.900px;opacity:.68;background:#6aa3cc"></div><div class="a" style="left:1687.08px;top:60.28px;width:0.91px;height:1.900px;opacity:.68;background:#bdbdbd"></div><div class="a" style="left:1689.10px;top:60.28px;width:2.93px;height:1.900px;opacity:.68;background:#4f86bd"></div><div class="a" style="left:1693.14px;top:60.28px;width:10.00px;height:1.900px;opacity:.68;background:#2f9c8a"></div><div class="a" style="left:1703.24px;top:60.28px;width:0.91px;height:1.900px;opacity:.68;background:#c8c8b0"></div><div class="a" style="left:1704.25px;top:60.28px;width:4.95px;height:1.900px;opacity:.68;background:#a86e58"></div><div class="a" style="left:1709.30px;top:60.28px;width:0.91px;height:1.900px;opacity:.68;background:#bdbdbd"></div><div class="a" style="left:1711.32px;top:60.28px;width:1.92px;height:1.900px;opacity:.68;background:#8ea384"></div><div class="a" style="left:1713.34px;top:60.28px;width:0.91px;height:1.900px;opacity:.68;background:#c8c8b0"></div><div class="a" style="left:1714.35px;top:60.28px;width:0.91px;height:1.900px;opacity:.68;background:#bdbdbd"></div>
<div class="a" style="left:1679.00px;top:63.30px;width:0.91px;height:1.900px;opacity:.68;background:#6aa3cc"></div><div class="a" style="left:1680.01px;top:63.30px;width:0.91px;height:1.900px;opacity:.68;background:#bdbdbd"></div><div class="a" style="left:1681.02px;top:63.30px;width:5.96px;height:1.900px;opacity:.68;background:#a5a57c"></div><div class="a" style="left:1687.08px;top:63.30px;width:0.91px;height:1.900px;opacity:.68;background:#c8c8b0"></div><div class="a" style="left:1688.09px;top:63.30px;width:2.93px;height:1.900px;opacity:.68;background:#8ea384"></div><div class="a" style="left:1691.12px;top:63.30px;width:0.91px;height:1.900px;opacity:.68;background:#c8c8b0"></div><div class="a" style="left:1692.13px;top:63.30px;width:0.91px;height:1.900px;opacity:.68;background:#bdbdbd"></div>
<div class="a" style="left:648px;top:624px;width:1088px;height:1px;background:#474747"></div>
<div class="row " style="left:0px;top:632px;width:1736px;height:22px;line-height:22px"><span class="t pt" style="left:668.1px;letter-spacing:-0.206px;color:#e7e7e7">PROBLEMS</span><div class="badge" style="left:736px;top:2px;width:21px;height:17px;line-height:18px">11</div><span class="t pt" style="left:777.6px;letter-spacing:-0.005px;">OUTPUT</span><span class="t pt" style="left:843.6px;letter-spacing:-0.156px;">DEBUG CONSOLE</span><span class="t pt" style="left:958.4px;letter-spacing:-0.090px;">TERMINAL</span></div>
<div class="a" style="left:668px;top:656px;width:60px;height:1px;background:#7a7a7a"></div>
<div class="a" style="left:1347.500px;top:631px;width:319.500px;height:24px;background:#38383d"></div>
<div class="row " style="left:0px;top:632px;width:1736px;height:22px;line-height:22px"><span class="t " style="left:1352.8px;letter-spacing:-0.075px;color:#888888;top:.100px;-webkit-text-stroke:.15px currentColor">Filter. Eg: text, **/*.ts, !**/node_modules/**</span></div>
<svg class="a" style="left:1644px;top:634.5px" width="19" height="18" viewBox="0 0 19 18" ><rect x="7.300" y="0.300" width="3" height="4" fill="#9c9c9c" transform="rotate(0 8.800 8.300)"/><rect x="7.300" y="0.300" width="3" height="4" fill="#9c9c9c" transform="rotate(45 8.800 8.300)"/><rect x="7.300" y="0.300" width="3" height="4" fill="#9c9c9c" transform="rotate(90 8.800 8.300)"/><rect x="7.300" y="0.300" width="3" height="4" fill="#9c9c9c" transform="rotate(135 8.800 8.300)"/><rect x="7.300" y="0.300" width="3" height="4" fill="#9c9c9c" transform="rotate(180 8.800 8.300)"/><rect x="7.300" y="0.300" width="3" height="4" fill="#9c9c9c" transform="rotate(225 8.800 8.300)"/><rect x="7.300" y="0.300" width="3" height="4" fill="#9c9c9c" transform="rotate(270 8.800 8.300)"/><rect x="7.300" y="0.300" width="3" height="4" fill="#9c9c9c" transform="rotate(315 8.800 8.300)"/><circle cx="8.800" cy="8.300" r="4.300" fill="none" stroke="#9c9c9c" stroke-width="3.300"/><circle cx="13.300" cy="12.500" r="4.600" fill="#37373c"/><circle cx="13.300" cy="12.500" r="3.900" fill="#c4c4c4"/><rect x="10.900" y="11.900" width="4.800" height="1.300" fill="#8a8a8a"/></svg><svg class="a" style="left:1684px;top:635px" width="16" height="16" viewBox="0 0 16 16" ><g fill="none" stroke="#e0e0e0" stroke-width="1.100"><path d="M5.500 2.500V1.200H14V9.500H12.800"/><path d="M3.500 4.500V3.200H12V11.500H10.800"/></g><rect x="1.700" y="5.600" width="8" height="8.200" fill="none" stroke="#e0e0e0" stroke-width="1.600"/><rect x="3.700" y="9.200" width="3.800" height="1.200" fill="#5bb0f0"/></svg><svg class="a" style="left:1715px;top:637px" width="16" height="12" viewBox="0 0 16 12" ><path d="M1.300 10L8 3.200 14.700 10" fill="none" stroke="#d4d4d4" stroke-width="1.500"/></svg>
<div class="row pr" style="left:0px;top:660px;width:1736px;height:22px;line-height:22px"><svg class="a" style="left:664.5px;top:7.3px" width="5.8" height="5.8" viewBox="0 0 6 6" ><path d="M6 0V6H0z" fill="#dcdcdc"/></svg><div class="a ic" style="left:679px;top:3.1px;width:13.8px;height:13.5px;background:#2d8ad6"><span class="icl" style="color:#06182b">TS</span></div><span class="t m" style="left:700.9px;letter-spacing:0.086px;">Taaxcva.ts</span><span class="t d" style="left:769.3px;letter-spacing:0.453px;">src</span><div class="badge" style="left:796px;top:2.500px;width:23px;height:16.500px;line-height:17.500px">10</div></div>
<div class="row pr" style="left:0px;top:682px;width:1736px;height:22px;line-height:22px"><svg class="a" style="left:688.8px;top:4.9px" width="10.4" height="10.4" viewBox="0 0 10.4 10.4" ><circle cx="5.200" cy="5.200" r="5.150" fill="#f48771"/><path d="M3.100 3.100L7.300 7.300M7.300 3.100L3.100 7.300" stroke="#222" stroke-width="1.800" fill="none"/></svg><span class="t m" style="left:708.3px;letter-spacing:0.181px;">Delete `<span class="big">↵</span>`</span><span class="t s" style="left:780.9px;letter-spacing:0.452px;">eslint(prettier/prettier)</span><span class="t s" style="left:923.5px;letter-spacing:-0.044px;">[2, 1]</span></div>
<div class="row pr" style="left:0px;top:704px;width:1736px;height:22px;line-height:22px"><svg class="a" style="left:688.8px;top:4.9px" width="10.4" height="10.4" viewBox="0 0 10.4 10.4" ><circle cx="5.200" cy="5.200" r="5.150" fill="#f48771"/><path d="M3.100 3.100L7.300 7.300M7.300 3.100L3.100 7.300" stroke="#222" stroke-width="1.800" fill="none"/></svg><span class="t m" style="left:708.3px;letter-spacing:0.544px;">Insert `;`</span><span class="t s" style="left:769.4px;letter-spacing:0.452px;">eslint(prettier/prettier)</span><span class="t s" style="left:911.2px;letter-spacing:-0.082px;">[10, 21]</span></div>
<div class="row pr" style="left:0px;top:726px;width:1736px;height:22px;line-height:22px"><svg class="a" style="left:688.8px;top:4.9px" width="10.4" height="10.4" viewBox="0 0 10.4 10.4" ><circle cx="5.200" cy="5.200" r="5.150" fill="#f48771"/><path d="M3.100 3.100L7.300 7.300M7.300 3.100L3.100 7.300" stroke="#222" stroke-width="1.800" fill="none"/></svg><span class="t m" style="left:708.3px;letter-spacing:0.287px;">Missing semicolon.</span><span class="t s" style="left:829.3px;letter-spacing:0.321px;">eslint(semi)</span><span class="t s" style="left:906.7px;letter-spacing:-0.082px;">[10, 21]</span></div>
<div class="row pr" style="left:0px;top:748px;width:1736px;height:22px;line-height:22px"><svg class="a" style="left:688.8px;top:4.9px" width="10.4" height="10.4" viewBox="0 0 10.4 10.4" ><circle cx="5.200" cy="5.200" r="5.150" fill="#f48771"/><path d="M3.100 3.100L7.300 7.300M7.300 3.100L3.100 7.300" stroke="#222" stroke-width="1.800" fill="none"/></svg><span class="t m" style="left:708.3px;letter-spacing:0.544px;">Insert `;`</span><span class="t s" style="left:769.4px;letter-spacing:0.452px;">eslint(prettier/prettier)</span><span class="t s" style="left:911.2px;letter-spacing:-0.201px;">[11, 19]</span></div>
<div class="row pr" style="left:0px;top:770px;width:1736px;height:22px;line-height:22px"><svg class="a" style="left:688.8px;top:4.9px" width="10.4" height="10.4" viewBox="0 0 10.4 10.4" ><circle cx="5.200" cy="5.200" r="5.150" fill="#f48771"/><path d="M3.100 3.100L7.300 7.300M7.300 3.100L3.100 7.300" stroke="#222" stroke-width="1.800" fill="none"/></svg><span class="t m" style="left:708.3px;letter-spacing:0.287px;">Missing semicolon.</span><span class="t s" style="left:829.3px;letter-spacing:0.321px;">eslint(semi)</span><span class="t s" style="left:906.7px;letter-spacing:-0.201px;">[11, 19]</span></div>
<div class="row pr" style="left:0px;top:792px;width:1736px;height:22px;line-height:22px"><svg class="a" style="left:688.8px;top:4.9px" width="10.4" height="10.4" viewBox="0 0 10.4 10.4" ><circle cx="5.200" cy="5.200" r="5.150" fill="#f48771"/><path d="M3.100 3.100L7.300 7.300M7.300 3.100L3.100 7.300" stroke="#222" stroke-width="1.800" fill="none"/></svg><span class="t m" style="left:708.3px;letter-spacing:0.544px;">Insert `;`</span><span class="t s" style="left:769.4px;letter-spacing:0.452px;">eslint(prettier/prettier)</span><span class="t s" style="left:911.2px;letter-spacing:0.189px;">[15, 20]</span></div>
<div class="row pr" style="left:0px;top:814px;width:1736px;height:22px;line-height:22px"><svg class="a" style="left:688.8px;top:4.9px" width="10.4" height="10.4" viewBox="0 0 10.4 10.4" ><circle cx="5.200" cy="5.200" r="5.150" fill="#f48771"/><path d="M3.100 3.100L7.300 7.300M7.300 3.100L3.100 7.300" stroke="#222" stroke-width="1.800" fill="none"/></svg><span class="t m" style="left:708.3px;letter-spacing:0.287px;">Missing semicolon.</span><span class="t s" style="left:829.3px;letter-spacing:0.321px;">eslint(semi)</span><span class="t s" style="left:906.7px;letter-spacing:0.189px;">[15, 20]</span></div>
<div class="row pr" style="left:0px;top:836px;width:1736px;height:22px;line-height:22px"><svg class="a" style="left:688.8px;top:4.9px" width="10.4" height="10.4" viewBox="0 0 10.4 10.4" ><circle cx="5.200" cy="5.200" r="5.150" fill="#f48771"/><path d="M3.100 3.100L7.300 7.300M7.300 3.100L3.100 7.300" stroke="#222" stroke-width="1.800" fill="none"/></svg><span class="t m" style="left:708.3px;letter-spacing:0.544px;">Insert `;`</span><span class="t s" style="left:769.4px;letter-spacing:0.452px;">eslint(prettier/prettier)</span><span class="t s" style="left:911.2px;letter-spacing:-0.025px;">[19, 19]</span></div>
<div class="row pr" style="left:0px;top:858px;width:1736px;height:22px;line-height:22px"><svg class="a" style="left:688.8px;top:4.9px" width="10.4" height="10.4" viewBox="0 0 10.4 10.4" ><circle cx="5.200" cy="5.200" r="5.150" fill="#f48771"/><path d="M3.100 3.100L7.300 7.300M7.300 3.100L3.100 7.300" stroke="#222" stroke-width="1.800" fill="none"/></svg><span class="t m" style="left:708.3px;letter-spacing:0.287px;">Missing semicolon.</span><span class="t s" style="left:829.3px;letter-spacing:0.321px;">eslint(semi)</span><span class="t s" style="left:906.7px;letter-spacing:-0.025px;">[19, 19]</span></div>
<div class="row pr" style="left:0px;top:880px;width:1736px;height:22px;line-height:22px"><svg class="a" style="left:688.8px;top:4.9px" width="10.4" height="10.4" viewBox="0 0 10.4 10.4" ><circle cx="5.200" cy="5.200" r="5.150" fill="#f48771"/><path d="M3.100 3.100L7.300 7.300M7.300 3.100L3.100 7.300" stroke="#222" stroke-width="1.800" fill="none"/></svg><span class="t m" style="left:708.3px;letter-spacing:0.181px;">Delete `<span class="big">↵</span>`</span><span class="t s" style="left:780.9px;letter-spacing:0.452px;">eslint(prettier/prettier)</span><span class="t s" style="left:923.5px;letter-spacing:-0.007px;">[22, 1]</span></div>
<div class="row pr" style="left:0px;top:902px;width:1736px;height:22px;line-height:22px"><svg class="a" style="left:664.5px;top:7.3px" width="5.8" height="5.8" viewBox="0 0 6 6" ><path d="M6 0V6H0z" fill="#dcdcdc"/></svg><div class="a ic" style="left:679px;top:3.1px;width:13.8px;height:13.5px;background:#2d8ad6"><span class="icl" style="color:#06182b">TS</span></div><span class="t m" style="left:700.1px;letter-spacing:0.497px;">test2.ts</span><span class="t d" style="left:751.5px;letter-spacing:0.403px;">src</span><div class="badge" style="left:777.6px;top:2.500px;width:18.2px;height:16.500px;line-height:17.500px">1</div></div>
<div class="row pr" style="left:0px;top:924px;width:1736px;height:22px;line-height:22px"><svg class="a" style="left:689.6px;top:4.7px" width="10" height="10.4" viewBox="0 0 10 10.4" ><path d="M5 1.200L9.200 9.200H0.800z" fill="#ffcc00" stroke="#ffcc00" stroke-width="1.500" stroke-linejoin="round"/><rect x="4.350" y="3.300" width="1.300" height="3.600" fill="#222"/><rect x="4.350" y="7.600" width="1.300" height="1.300" fill="#222"/></svg><span class="t m" style="left:708.3px;letter-spacing:0.293px;">'React' is defined but never used.</span><span class="t s" style="left:916.1px;letter-spacing:0.398px;">eslint(no-unused-vars)</span><span class="t s" style="left:1062px;letter-spacing:-0.123px;">[1, 13]</span></div>
</div>
</body></html>
